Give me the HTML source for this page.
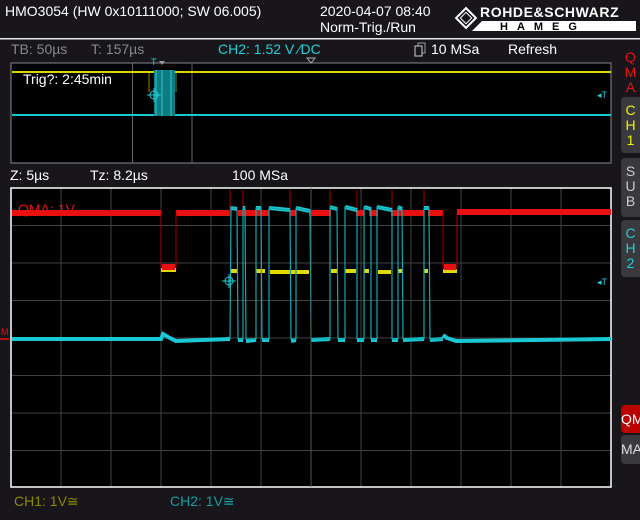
<!DOCTYPE html>
<html><head><meta charset="utf-8"><style>
html,body{margin:0;padding:0;background:#18161a;}
body{width:640px;height:520px;overflow:hidden;position:relative;font-family:"Liberation Sans","DejaVu Sans",sans-serif;}
.t{position:absolute;white-space:nowrap;font-size:14px;line-height:15px;}
.tab{position:absolute;left:621px;width:19px;background:#3a393e;border-radius:4px 0 0 4px;color:#fff;font-size:14px;line-height:15px;text-align:center;font-family:"Liberation Sans",sans-serif;}
</style></head><body>
<svg width="640" height="520" style="position:absolute;left:0;top:0" xmlns="http://www.w3.org/2000/svg">
<rect x="0" y="38" width="640" height="1.5" fill="#e8e8e8"/>
<g transform="translate(466,18) rotate(45)"><rect x="-8" y="-8" width="16" height="16" fill="#fff"/><rect x="-6" y="-6" width="12" height="12" fill="#18161a"/><rect x="-4" y="-4" width="8" height="8" fill="none" stroke="#fff" stroke-width="1"/></g>
<polygon points="482,21 636,21 636,31 472,31" fill="#fff"/>
<text x="500" y="30" font-family="Liberation Sans" font-weight="bold" font-size="11" fill="#000" letter-spacing="9">HAMEG</text>
<rect x="11" y="63" width="600" height="100" fill="#000" stroke="#888" stroke-width="1"/>
<line x1="132.5" y1="63" x2="132.5" y2="163" stroke="#666"/>
<line x1="192" y1="63" x2="192" y2="163" stroke="#666"/>
<polyline points="12,72 611,72" stroke="#d8d800" stroke-width="2" fill="none"/>
<polyline points="12,115 611,115" stroke="#17c8d0" stroke-width="2" fill="none"/>
<line x1="149" y1="73" x2="149" y2="92" stroke="#8a8a00"/>
<line x1="176" y1="73" x2="176" y2="92" stroke="#8a8a00"/>
<rect x="154" y="70" width="21" height="46" fill="#0f7a80"/>
<line x1="156" y1="70" x2="156" y2="116" stroke="#20d0d8"/>
<line x1="162" y1="70" x2="162" y2="116" stroke="#20d0d8"/>
<line x1="171" y1="70" x2="171" y2="116" stroke="#20d0d8"/>
<circle cx="154" cy="95" r="4" fill="none" stroke="#20d0d8"/>
<line x1="147" y1="95" x2="161" y2="95" stroke="#20d0d8"/><line x1="154" y1="88" x2="154" y2="102" stroke="#20d0d8"/>
<text x="151" y="65" font-size="9" fill="#20d0d8" font-family="Liberation Sans">T</text>
<polygon points="159,61 165,61 162,65" fill="#999"/>
<polygon points="307,58 315,58 311,63" fill="none" stroke="#aaa"/>
<text x="597" y="98" font-size="9" fill="#20d0d8" font-family="Liberation Sans">◂T</text>
<rect x="11" y="188" width="600" height="299" fill="#000"/>
<g stroke="#424242" stroke-width="1">
<line x1="61" y1="188" x2="61" y2="487"/><line x1="111" y1="188" x2="111" y2="487"/><line x1="161" y1="188" x2="161" y2="487"/><line x1="211" y1="188" x2="211" y2="487"/><line x1="261" y1="188" x2="261" y2="487"/><line x1="311" y1="188" x2="311" y2="487"/><line x1="361" y1="188" x2="361" y2="487"/><line x1="411" y1="188" x2="411" y2="487"/><line x1="461" y1="188" x2="461" y2="487"/><line x1="511" y1="188" x2="511" y2="487"/><line x1="561" y1="188" x2="561" y2="487"/>
<line x1="11" y1="225.5" x2="611" y2="225.5"/><line x1="11" y1="263" x2="611" y2="263"/><line x1="11" y1="300.5" x2="611" y2="300.5"/><line x1="11" y1="338" x2="611" y2="338"/><line x1="11" y1="375.5" x2="611" y2="375.5"/><line x1="11" y1="413" x2="611" y2="413"/><line x1="11" y1="450.5" x2="611" y2="450.5"/>
</g>
<rect x="11" y="188" width="600" height="299" fill="none" stroke="#fff" stroke-width="1.5"/>
<g stroke="#e0d800" stroke-width="4">
<line x1="161" y1="270" x2="176" y2="270"/><line x1="230" y1="271" x2="238" y2="271"/><line x1="256" y1="271" x2="265" y2="271"/><line x1="270" y1="272" x2="309" y2="272"/><line x1="331" y1="271" x2="337" y2="271"/><line x1="345" y1="271" x2="356" y2="271"/><line x1="364" y1="271" x2="369" y2="271"/><line x1="378" y1="272" x2="391" y2="272"/><line x1="398" y1="271" x2="402" y2="271"/><line x1="424" y1="271" x2="428" y2="271"/><line x1="443" y1="271" x2="457" y2="271"/>
</g>
<g stroke="#e81010" stroke-width="6" fill="none">
<polyline points="12,213 161,213"/><polyline points="176,213 230,213"/>
<polyline points="238,213 256,213"/><polyline points="256,213 269,213"/><polyline points="290,213 296,213"/><polyline points="309,213 331,213"/><polyline points="356,213 364,213"/><polyline points="369,213 378,213"/><polyline points="391,213 424,213"/><polyline points="428,213 443,213"/>
<polyline points="457,212 611,212"/>
<line x1="162" y1="267" x2="175" y2="267"/><line x1="444" y1="267" x2="456" y2="267"/>
</g>
<g stroke="#a00" stroke-width="1">
<line x1="161" y1="213" x2="161" y2="268"/><line x1="176" y1="213" x2="176" y2="268"/><line x1="443" y1="213" x2="443" y2="268"/><line x1="457" y1="213" x2="457" y2="268"/>
<line x1="230" y1="190" x2="230" y2="213"/><line x1="243" y1="190" x2="243" y2="213"/><line x1="290" y1="190" x2="290" y2="213"/><line x1="330" y1="190" x2="330" y2="213"/><line x1="357" y1="190" x2="357" y2="213"/><line x1="392" y1="190" x2="392" y2="213"/><line x1="424" y1="190" x2="424" y2="213"/>
</g>
<g stroke="#18c8d4" stroke-width="4" fill="none">
<polyline points="12,339 161,339 163,334 168,337 176,341 230,339"/>
<polyline points="443,335 447,338 456,341 611,339"/>
<line x1="231" y1="208" x2="237" y2="209"/><line x1="243" y1="208" x2="245" y2="208"/><line x1="256" y1="208" x2="261" y2="208"/><line x1="269" y1="208" x2="290" y2="210"/><line x1="296" y1="208" x2="310" y2="211"/><line x1="330" y1="207" x2="337" y2="209"/><line x1="345" y1="207" x2="357" y2="210"/><line x1="364" y1="207" x2="371" y2="209"/><line x1="377" y1="207" x2="392" y2="210"/><line x1="398" y1="207" x2="402" y2="209"/><line x1="424" y1="208" x2="429" y2="208"/>
<line x1="238" y1="340" x2="243" y2="340"/><line x1="246" y1="341" x2="256" y2="340"/><line x1="262" y1="340" x2="269" y2="340"/><line x1="291" y1="341" x2="296" y2="340"/><line x1="311" y1="340" x2="330" y2="339"/><line x1="338" y1="340" x2="345" y2="340"/><line x1="357" y1="340" x2="364" y2="340"/><line x1="371" y1="340" x2="377" y2="340"/><line x1="392" y1="340" x2="398" y2="340"/><line x1="403" y1="340" x2="424" y2="339"/><line x1="430" y1="340" x2="443" y2="339"/>
</g>
<g stroke="#12a8b0" stroke-width="1.2" fill="none">
<polyline points="230,339 231,207 237,210 238,339 243,339 243,208 245,208 246,339 256,339 256,208 261,208 262,339 269,339 269,208 290,210 291,339 296,339 296,208 310,211 311,339 330,339 330,207 337,209 338,339 345,339 345,207 357,210 357,339 364,339 364,207 371,209 371,339 377,339 377,207 392,210 392,339 398,339 398,207 402,209 403,339 424,339 424,208 429,208 430,339 443,339"/>
</g>
<line x1="311" y1="188" x2="311" y2="487" stroke="#555"/>
<circle cx="229" cy="281" r="4" fill="none" stroke="#20d0d8"/>
<line x1="222" y1="281" x2="236" y2="281" stroke="#20d0d8"/><line x1="229" y1="274" x2="229" y2="288" stroke="#20d0d8"/>
<text x="597" y="285" font-size="9" fill="#20d0d8" font-family="Liberation Sans">◂T</text>
<text x="1" y="335" font-size="9" fill="#e81010" font-family="Liberation Sans">M</text>
<line x1="0" y1="339" x2="9" y2="339" stroke="#e81010" stroke-width="1.5"/>
<rect x="418" y="43" width="7" height="10" fill="none" stroke="#999"/><rect x="415" y="46" width="7" height="10" fill="#18161a" stroke="#ccc"/>
</svg>
<div class="t" style="left:5px;top:4px;color:#fff;">HMO3054 (HW 0x10111000; SW 06.005)</div>
<div class="t" style="left:320px;top:4px;color:#fff;">2020-04-07 08:40</div>
<div class="t" style="left:320px;top:20px;color:#fff;">Norm-Trig./Run</div>
<div class="t" style="left:480px;top:5px;color:#fff;font-weight:bold;font-size:14px;letter-spacing:0.6px;">ROHDE&amp;SCHWARZ</div>
<div class="t" style="left:11px;top:42px;color:#888;">TB: 50µs</div>
<div class="t" style="left:91px;top:42px;color:#888;">T: 157µs</div>
<div class="t" style="left:218px;top:42px;color:#20d0d8;">CH2: 1.52 V ⁄DC</div>
<div class="t" style="left:431px;top:42px;color:#fff;">10 MSa</div>
<div class="t" style="left:508px;top:42px;color:#fff;">Refresh</div>
<div class="t" style="left:23px;top:72px;color:#fff;">Trig?: 2:45min</div>
<div class="t" style="left:10px;top:168px;color:#fff;">Z: 5µs</div>
<div class="t" style="left:90px;top:168px;color:#fff;">Tz: 8.2µs</div>
<div class="t" style="left:232px;top:168px;color:#fff;">100 MSa</div>
<div class="t" style="left:18px;top:202px;color:#e81010;">QMA: 1V</div>
<div class="t" style="left:14px;top:494px;color:#8a8a00;">CH1: 1V≅</div>
<div class="t" style="left:170px;top:494px;color:#14a0a0;">CH2: 1V≅</div>
<div class="tab" style="top:50px;height:40px;background:transparent;color:#e81010;">Q<br>M<br>A</div>
<div class="tab" style="top:97px;height:56px;color:#f0f000;padding-top:6px;box-sizing:border-box;">C<br>H<br>1</div>
<div class="tab" style="top:158px;height:59px;color:#ccc;padding-top:6px;box-sizing:border-box;">S<br>U<br>B</div>
<div class="tab" style="top:220px;height:57px;color:#20d0d8;padding-top:6px;box-sizing:border-box;">C<br>H<br>2</div>
<div class="tab" style="top:405px;height:28px;background:#b00;line-height:28px;text-align:left;">QM</div>
<div class="tab" style="top:435px;height:29px;line-height:29px;text-align:left;color:#ddd;">MA</div>
</body></html>
